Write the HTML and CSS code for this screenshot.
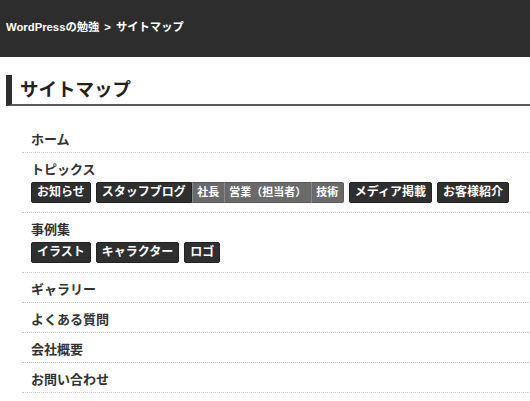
FILE: index.html
```html
<!DOCTYPE html>
<html lang="ja">
<head>
<meta charset="utf-8">
<title>サイトマップ</title>
<link rel="stylesheet" href="styles.css">
</head>
<body>
<header class="site-header">
  <nav class="breadcrumb"><a href="#">WordPressの勉強</a><span class="sep">&gt;</span><span>サイトマップ</span></nav>
</header>
<main class="content">
  <h1 class="page-title">サイトマップ</h1>
  <ul class="sitemap">
    <li class="sitemap-item"><a class="item-link" href="#">ホーム</a></li>
    <li class="sitemap-item">
      <a class="item-link" href="#">トピックス</a>
      <ul class="tags">
        <li><a class="tag" href="#">お知らせ</a></li>
        <li class="tag-group">
          <a class="tag tag-parent" href="#">スタッフブログ</a>
          <ul class="subtags">
            <li><a class="subtag" href="#">社長</a></li>
            <li><a class="subtag" href="#">営業（担当者）</a></li>
            <li><a class="subtag subtag-last" href="#">技術</a></li>
          </ul>
        </li>
        <li><a class="tag" href="#">メディア掲載</a></li>
        <li><a class="tag" href="#">お客様紹介</a></li>
      </ul>
    </li>
    <li class="sitemap-item">
      <a class="item-link" href="#">事例集</a>
      <ul class="tags">
        <li><a class="tag" href="#">イラスト</a></li>
        <li><a class="tag" href="#">キャラクター</a></li>
        <li><a class="tag" href="#">ロゴ</a></li>
      </ul>
    </li>
    <li class="sitemap-item"><a class="item-link" href="#">ギャラリー</a></li>
    <li class="sitemap-item"><a class="item-link" href="#">よくある質問</a></li>
    <li class="sitemap-item"><a class="item-link" href="#">会社概要</a></li>
    <li class="sitemap-item"><a class="item-link" href="#">お問い合わせ</a></li>
  </ul>
</main>
</body>
</html>
```
FILE: styles.css
```css
* { box-sizing: border-box; }
html, body { margin: 0; padding: 0; background: #fff; }
body {
  font-family: "Liberation Sans", "Noto Sans CJK JP", sans-serif;
  color: #333;
}
a { color: inherit; text-decoration: none; }
ul { list-style: none; margin: 0; padding: 0; }

.site-header {
  height: 57px;
  background: #2d2d2d;
  padding: 19px 0 0 6px;
}
.breadcrumb {
  font-size: 11.3px;
  font-weight: bold;
  line-height: 16px;
  color: #fff;
}
.breadcrumb .sep { margin: 0 5px; }

.content { padding: 0 0 0 6px; }

.page-title {
  margin: 18px 0 0;
  height: 31px;
  border-left: 6px solid #2d2d2d;
  border-bottom: 2px solid #5a5a5a;
  padding: 3px 0 0 8px;
  font-size: 18.5px;
  line-height: 24px;
  font-weight: bold;
  color: #222;
}

.sitemap { margin: 17px 0 0 16px; }
.sitemap-item {
  padding: 9px 0 4px 9px;
  border-bottom: 1px dotted #c8c8c8;
}
.item-link {
  display: block;
  font-size: 13px;
  line-height: 16px;
  font-weight: bold;
  color: #333;
}

.tags {
  display: flex;
  flex-wrap: wrap;
  gap: 5px;
  margin: 4px 0 5px;
}
.tag-group { display: flex; }
.tag {
  display: block;
  height: 21px;
  line-height: 19px;
  padding: 0 5px;
  background: #2f2f2f;
  border: 1px solid #222;
  border-radius: 2px;
  color: #fff;
  font-size: 12px;
  font-weight: bold;
}
.tag-parent { border-radius: 2px 0 0 2px; }
.subtags { display: flex; }
.subtag {
  display: block;
  height: 21px;
  line-height: 19px;
  padding: 0 4.5px;
  background: #6a6a6a;
  border-top: 1px solid #5a5a5a;
  border-bottom: 1px solid #5a5a5a;
  border-left: 1px solid #8a8a8a;
  color: #fff;
  font-size: 11px;
  font-weight: bold;
}
.subtag-last { border-right: 1px solid #5a5a5a; border-radius: 0 2px 2px 0; }
```
